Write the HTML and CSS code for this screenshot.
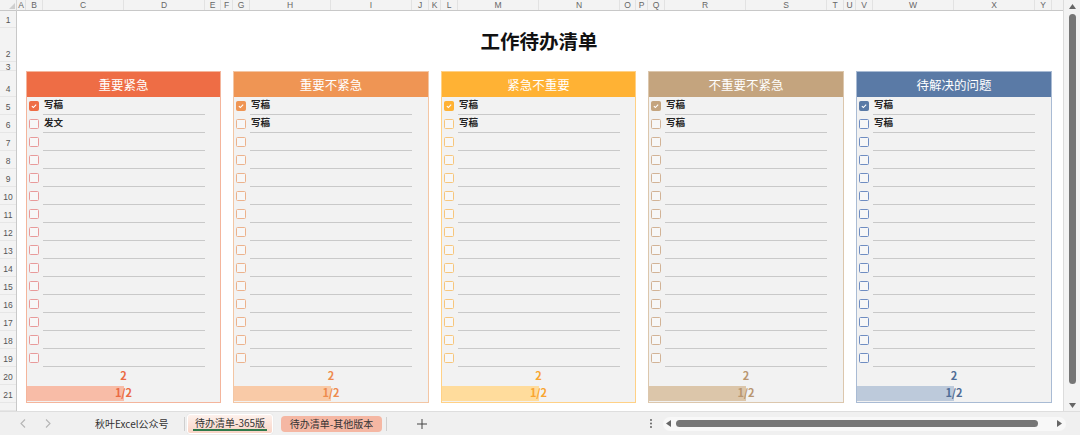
FILE: index.html
```html
<!DOCTYPE html>
<html lang="zh-CN">
<head>
<meta charset="utf-8">
<title>工作待办清单</title>
<link rel="stylesheet" href="styles.css">
</head>
<body>
<div class="window">
  <div class="corner"><span class="corner-tri"></span></div>
  <div class="colhead">
    <span class="ch w9">A</span><span class="ch w17">B</span><span class="ch w81">C</span><span class="ch w81">D</span><span class="ch w16">E</span><span class="ch w12">F</span>
    <span class="ch w17">G</span><span class="ch w81">H</span><span class="ch w81">I</span><span class="ch w17">J</span><span class="ch w12">K</span>
    <span class="ch w17">L</span><span class="ch w81">M</span><span class="ch w81">N</span><span class="ch w16">O</span><span class="ch w12">P</span>
    <span class="ch w17">Q</span><span class="ch w81">R</span><span class="ch w81">S</span><span class="ch w17">T</span><span class="ch w12">U</span>
    <span class="ch w17">V</span><span class="ch w81">W</span><span class="ch w81">X</span><span class="ch w17">Y</span><span class="ch rest"></span>
  </div>
  <div class="vscroll">
    <svg class="arrow-up" width="7" height="5" viewBox="0 0 7 5"><path d="M3.5 0 L7 5 L0 5 Z"/></svg>
    <span class="vthumb"></span>
    <svg class="arrow-down" width="7" height="5" viewBox="0 0 7 5"><path d="M0 0 L7 0 L3.5 5 Z"/></svg>
  </div>
  <div class="rowhead">
    <span class="rh">1</span><span class="rh">2</span><span class="rh">3</span><span class="rh">4</span><span class="rh">5</span><span class="rh">6</span><span class="rh">7</span><span class="rh">8</span><span class="rh">9</span><span class="rh">10</span><span class="rh">11</span><span class="rh">12</span><span class="rh">13</span><span class="rh">14</span><span class="rh">15</span><span class="rh">16</span><span class="rh">17</span><span class="rh">18</span><span class="rh">19</span><span class="rh">20</span><span class="rh">21</span><span class="rh"></span>
  </div>
  <div class="sheet">
    <h1 class="title">工作待办清单</h1>
    <div class="cards">
      <section class="card c1">
        <div class="card-head">重要紧急</div>
        <div class="item"><span class="cb on"><svg viewBox="0 0 10 10"><path d="M2.3 5.1 L4.2 6.9 L7.7 3.2"/></svg></span><span class="line">写稿</span></div>
        <div class="item"><span class="cb"></span><span class="line">发文</span></div>
        <div class="item"><span class="cb"></span><span class="line"></span></div>
        <div class="item"><span class="cb"></span><span class="line"></span></div>
        <div class="item"><span class="cb"></span><span class="line"></span></div>
        <div class="item"><span class="cb"></span><span class="line"></span></div>
        <div class="item"><span class="cb"></span><span class="line"></span></div>
        <div class="item"><span class="cb"></span><span class="line"></span></div>
        <div class="item"><span class="cb"></span><span class="line"></span></div>
        <div class="item"><span class="cb"></span><span class="line"></span></div>
        <div class="item"><span class="cb"></span><span class="line"></span></div>
        <div class="item"><span class="cb"></span><span class="line"></span></div>
        <div class="item"><span class="cb"></span><span class="line"></span></div>
        <div class="item"><span class="cb"></span><span class="line"></span></div>
        <div class="item"><span class="cb"></span><span class="line"></span></div>
        <div class="count">2</div>
        <div class="progress"><span class="bar" style="width:50%"></span><span class="frac">1/2</span></div>
      </section>
      <section class="card c2">
        <div class="card-head">重要不紧急</div>
        <div class="item"><span class="cb on"><svg viewBox="0 0 10 10"><path d="M2.3 5.1 L4.2 6.9 L7.7 3.2"/></svg></span><span class="line">写稿</span></div>
        <div class="item"><span class="cb"></span><span class="line">写稿</span></div>
        <div class="item"><span class="cb"></span><span class="line"></span></div>
        <div class="item"><span class="cb"></span><span class="line"></span></div>
        <div class="item"><span class="cb"></span><span class="line"></span></div>
        <div class="item"><span class="cb"></span><span class="line"></span></div>
        <div class="item"><span class="cb"></span><span class="line"></span></div>
        <div class="item"><span class="cb"></span><span class="line"></span></div>
        <div class="item"><span class="cb"></span><span class="line"></span></div>
        <div class="item"><span class="cb"></span><span class="line"></span></div>
        <div class="item"><span class="cb"></span><span class="line"></span></div>
        <div class="item"><span class="cb"></span><span class="line"></span></div>
        <div class="item"><span class="cb"></span><span class="line"></span></div>
        <div class="item"><span class="cb"></span><span class="line"></span></div>
        <div class="item"><span class="cb"></span><span class="line"></span></div>
        <div class="count">2</div>
        <div class="progress"><span class="bar" style="width:50%"></span><span class="frac">1/2</span></div>
      </section>
      <section class="card c3">
        <div class="card-head">紧急不重要</div>
        <div class="item"><span class="cb on"><svg viewBox="0 0 10 10"><path d="M2.3 5.1 L4.2 6.9 L7.7 3.2"/></svg></span><span class="line">写稿</span></div>
        <div class="item"><span class="cb"></span><span class="line">写稿</span></div>
        <div class="item"><span class="cb"></span><span class="line"></span></div>
        <div class="item"><span class="cb"></span><span class="line"></span></div>
        <div class="item"><span class="cb"></span><span class="line"></span></div>
        <div class="item"><span class="cb"></span><span class="line"></span></div>
        <div class="item"><span class="cb"></span><span class="line"></span></div>
        <div class="item"><span class="cb"></span><span class="line"></span></div>
        <div class="item"><span class="cb"></span><span class="line"></span></div>
        <div class="item"><span class="cb"></span><span class="line"></span></div>
        <div class="item"><span class="cb"></span><span class="line"></span></div>
        <div class="item"><span class="cb"></span><span class="line"></span></div>
        <div class="item"><span class="cb"></span><span class="line"></span></div>
        <div class="item"><span class="cb"></span><span class="line"></span></div>
        <div class="item"><span class="cb"></span><span class="line"></span></div>
        <div class="count">2</div>
        <div class="progress"><span class="bar" style="width:50%"></span><span class="frac">1/2</span></div>
      </section>
      <section class="card c4">
        <div class="card-head">不重要不紧急</div>
        <div class="item"><span class="cb on"><svg viewBox="0 0 10 10"><path d="M2.3 5.1 L4.2 6.9 L7.7 3.2"/></svg></span><span class="line">写稿</span></div>
        <div class="item"><span class="cb"></span><span class="line">写稿</span></div>
        <div class="item"><span class="cb"></span><span class="line"></span></div>
        <div class="item"><span class="cb"></span><span class="line"></span></div>
        <div class="item"><span class="cb"></span><span class="line"></span></div>
        <div class="item"><span class="cb"></span><span class="line"></span></div>
        <div class="item"><span class="cb"></span><span class="line"></span></div>
        <div class="item"><span class="cb"></span><span class="line"></span></div>
        <div class="item"><span class="cb"></span><span class="line"></span></div>
        <div class="item"><span class="cb"></span><span class="line"></span></div>
        <div class="item"><span class="cb"></span><span class="line"></span></div>
        <div class="item"><span class="cb"></span><span class="line"></span></div>
        <div class="item"><span class="cb"></span><span class="line"></span></div>
        <div class="item"><span class="cb"></span><span class="line"></span></div>
        <div class="item"><span class="cb"></span><span class="line"></span></div>
        <div class="count">2</div>
        <div class="progress"><span class="bar" style="width:50%"></span><span class="frac">1/2</span></div>
      </section>
      <section class="card c5">
        <div class="card-head">待解决的问题</div>
        <div class="item"><span class="cb on"><svg viewBox="0 0 10 10"><path d="M2.3 5.1 L4.2 6.9 L7.7 3.2"/></svg></span><span class="line">写稿</span></div>
        <div class="item"><span class="cb"></span><span class="line">写稿</span></div>
        <div class="item"><span class="cb"></span><span class="line"></span></div>
        <div class="item"><span class="cb"></span><span class="line"></span></div>
        <div class="item"><span class="cb"></span><span class="line"></span></div>
        <div class="item"><span class="cb"></span><span class="line"></span></div>
        <div class="item"><span class="cb"></span><span class="line"></span></div>
        <div class="item"><span class="cb"></span><span class="line"></span></div>
        <div class="item"><span class="cb"></span><span class="line"></span></div>
        <div class="item"><span class="cb"></span><span class="line"></span></div>
        <div class="item"><span class="cb"></span><span class="line"></span></div>
        <div class="item"><span class="cb"></span><span class="line"></span></div>
        <div class="item"><span class="cb"></span><span class="line"></span></div>
        <div class="item"><span class="cb"></span><span class="line"></span></div>
        <div class="item"><span class="cb"></span><span class="line"></span></div>
        <div class="count">2</div>
        <div class="progress"><span class="bar" style="width:50%"></span><span class="frac">1/2</span></div>
      </section>
    </div>
  </div>
  <div class="tabbar">
    <svg class="nav nav-prev" width="6" height="9" viewBox="0 0 6 9"><path d="M5 0.5 L1 4.5 L5 8.5"/></svg>
    <svg class="nav nav-next" width="6" height="9" viewBox="0 0 6 9"><path d="M1 0.5 L5 4.5 L1 8.5"/></svg>
    <span class="tab tab-plain">秋叶Excel公众号</span>
    <span class="tab-sep sep-a"></span>
    <span class="tab tab-active">待办清单-365版</span>
    <span class="tab tab-alt">待办清单-其他版本</span>
    <span class="tab-sep sep-b"></span>
    <svg class="add" width="10" height="10" viewBox="0 0 10 10"><path d="M5 0 V10 M0 5 H10"/></svg>
    <svg class="more" width="2" height="9" viewBox="0 0 2 9"><circle cx="1" cy="1" r="0.9"/><circle cx="1" cy="4.5" r="0.9"/><circle cx="1" cy="8" r="0.9"/></svg>
    <div class="hscroll">
      <svg width="5" height="7" viewBox="0 0 5 7"><path d="M0 3.5 L5 0 L5 7 Z"/></svg>
      <span class="hthumb"></span>
      <svg width="5" height="7" viewBox="0 0 5 7"><path d="M5 3.5 L0 0 L0 7 Z"/></svg>
    </div>
  </div>
</div>
</body>
</html>
```
FILE: styles.css
```css
* { box-sizing: border-box; margin: 0; padding: 0; }
html, body { width: 1080px; height: 435px; overflow: hidden; }
body { font-family: "Noto Sans CJK SC", "Noto Sans", sans-serif; background: #fff; color: #222; }

.window {
  display: grid;
  grid-template-columns: 17px 1046px 17px;
  grid-template-rows: 11px 400px 24px;
  width: 1080px;
  height: 435px;
}

/* corner */
.corner {
  grid-column: 1; grid-row: 1;
  background: #f3f3f3;
  border-right: 1px solid #d6d6d6;
  border-bottom: 1px solid #c8c8c8;
  display: flex; justify-content: flex-end; align-items: flex-end;
  padding: 0 1px 1px 0;
}
.corner-tri { width: 0; height: 0; border-left: 6px solid transparent; border-bottom: 6px solid #cfcfcf; }

/* column header */
.colhead {
  grid-column: 2; grid-row: 1;
  display: flex;
  background: #f3f3f3;
  border-bottom: 1px solid #c8c8c8;
}
.ch {
  flex: none;
  font: 8.5px/10px "Liberation Sans", sans-serif;
  color: #666;
  text-align: center;
  border-right: 1px solid #e2e2e2;
}
.w9 { width: 9px; } .w12 { width: 12px; } .w16 { width: 16px; } .w17 { width: 17px; } .w81 { width: 81px; }
.ch.rest { flex: 1; border-right: 0; }

/* row header */
.rowhead {
  grid-column: 1; grid-row: 2;
  display: grid;
  grid-template-rows: 17px 34px 9px 26px repeat(17, 18px) 1fr;
  background: #f3f3f3;
  border-right: 1px solid #c8c8c8;
}
.rh {
  display: flex; align-items: safe flex-end; justify-content: center;
  font: 8.5px/10px "Liberation Sans", sans-serif;
  color: #555;
  padding-bottom: 2px;
  border-bottom: 1px solid #e6e6e6;
  overflow: visible;
}

/* vertical scrollbar */
.vscroll {
  grid-column: 3; grid-row: 1 / 3;
  background: #f3f3f3;
  border-left: 1px solid #dcdcdc;
  display: flex; flex-direction: column; align-items: center;
  padding: 4px 0 3px;
}
.vscroll svg { fill: #666; flex: none; }
.vthumb { width: 7px; height: 370px; margin: 5px 0 auto; background: #767676; border-radius: 4px; }

/* sheet */
.sheet {
  grid-column: 2; grid-row: 2;
  background: #fff;
  padding: 17px 0 0 9px;
  display: flex; flex-direction: column;
}
.title {
  width: 1026px; height: 34px; margin-bottom: 9px;
  padding-bottom: 9px;
  display: flex; align-items: center; justify-content: center;
  font-size: 19.5px; font-weight: 700; color: #111;
}
.cards {
  display: grid;
  grid-template-columns: 195px 196px 195px 196px 196px;
  column-gap: 12px;
}

.c1 { --main: #ee6d45; --border: #f4b59c; --cb: #e89a9a; --bar: #f8bca7; --num: #ea6a44; }
.c2 { --main: #ef9554; --border: #f3c6a4; --cb: #ecb28c; --bar: #f9caa7; --num: #ee8b4e; }
.c3 { --main: #ffb234; --border: #ffd186; --cb: #f7c67c; --bar: #ffdc9c; --num: #f9a530; }
.c4 { --main: #c4a47e; --border: #dcc7ad; --cb: #d2b396; --bar: #dcc6aa; --num: #b99670; }
.c5 { --main: #5a7aa6; --border: #a9bbd4; --cb: #6f8dc2; --bar: #bdcadb; --num: #506d96; }

.card {
  border: 1px solid var(--border);
  background: #f2f2f2;
  display: flex; flex-direction: column;
}
.card-head {
  height: 25px;
  padding-bottom: 1px;
  background: var(--main);
  color: #fff;
  display: flex; align-items: center; justify-content: center;
  font-size: 12.5px;
}
.item {
  height: 18px;
  display: grid;
  grid-template-columns: 16px 162px 1fr;
  align-items: center;
}
.cb {
  width: 10px; height: 10px;
  margin-left: 2px;
  border: 1px solid var(--cb);
  border-radius: 1.5px;
  background: #f7f7f7;
  display: flex;
}
.cb.on { background: var(--main); border-color: var(--main); }
.cb svg { width: 8px; height: 8px; fill: none; stroke: #fff; stroke-width: 1.4; }
.line {
  height: 18px;
  border-bottom: 1px solid #c9c9c9;
  display: flex; align-items: center;
  padding: 0 0 3px 1px;
  font-size: 9.5px; font-weight: 700; color: #222;
}
.count {
  height: 18px;
  padding-bottom: 2px;
  display: flex; align-items: center; justify-content: center;
  font-size: 11px; font-weight: 700; color: var(--num);
}
.progress {
  height: 17px;
  padding-top: 1px;
  display: grid;
}
.bar, .frac { grid-area: 1 / 1; }
.bar { height: 15px; background: var(--bar); }
.frac {
  justify-self: center; align-self: start;
  font-size: 11px; font-weight: 700; color: var(--num);
  line-height: 13px;
}

/* tab bar */
.tabbar {
  grid-column: 1 / 4; grid-row: 3;
  display: flex; align-items: center;
  background: #f0f0f0;
  border-top: 1px solid #dedede;
  font-size: 10px; color: #333;
}
.nav { flex: none; fill: none; stroke: #b4b4b4; stroke-width: 1.1; }
.nav-prev { margin-left: 20px; }
.nav-next { margin-left: 19px; }
.tab { flex: none; line-height: 14px; white-space: nowrap; }
.tab-plain { margin-left: 44px; width: 80px; }
.tab-sep { flex: none; width: 1px; height: 14px; background: #cfcfcf; }
.sep-a { margin-left: 9px; }
.tab-active {
  margin-left: 2px; width: 86px; height: 20px;
  display: flex; align-items: center; justify-content: center;
  background: linear-gradient(#fdf1ec, #f9d4c6);
  border: 1px solid #fff;
  border-radius: 3px;
  box-shadow: 0 0 1px rgba(0,0,0,0.15);
  position: relative;
  padding-bottom: 2px;
}
.tab-active::after {
  content: ""; position: absolute; left: 5px; right: 5px; bottom: 2px;
  height: 2px; background: #2f7a4b;
}
.tab-alt {
  margin-left: 8px; width: 101px; height: 16px;
  display: flex; align-items: center; justify-content: center;
  background: #f5b7a3;
  border-radius: 4px;
}
.sep-b { margin-left: 4px; }
.add { flex: none; margin-left: 30px; stroke: #444; stroke-width: 1; }
.more { flex: none; margin-left: 223px; fill: #555; }
.hscroll {
  flex: none;
  margin-left: 11px; width: 403px; height: 14px;
  background: #f8f8f8;
  border-radius: 7px;
  display: flex; align-items: center;
  padding: 0 4px 0 3px;
}
.hscroll svg { flex: none; fill: #666; }
.hthumb { width: 362px; height: 7px; margin: 0 auto 0 5px; background: #767676; border-radius: 4px; }
```
